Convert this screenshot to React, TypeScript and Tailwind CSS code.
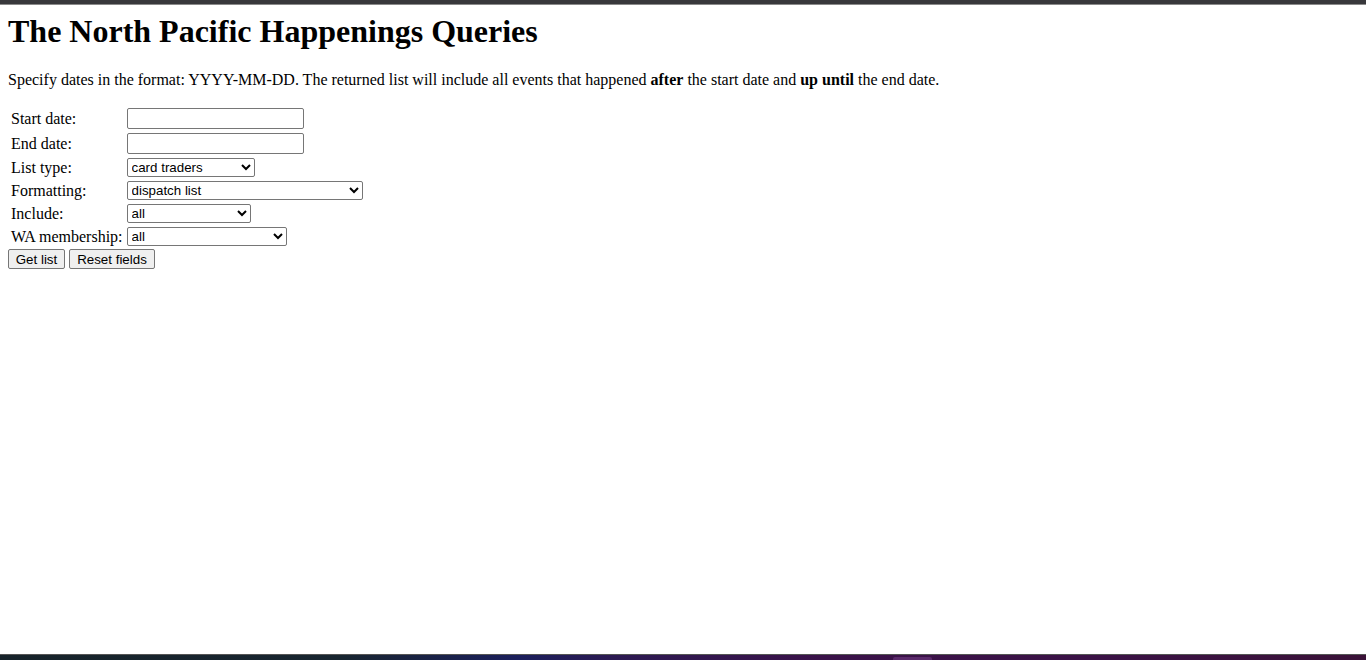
import React from "react";

const serif = { fontFamily: '"Liberation Serif", "Times New Roman", serif' };

function Label({ children }: { children: React.ReactNode }) {
  return <td className="p-[1px] align-middle text-[16px] leading-[18px] whitespace-nowrap">{children}</td>;
}

export default function App() {
  const selectCls =
    "block h-[19px] border border-[#767676] rounded-[2px] bg-white text-black text-[13.333px] leading-[15px] pl-0 py-0 [font-family:'Liberation_Sans',Arial,sans-serif]";
  const inputCls =
    "block h-[21px] w-[177px] border border-[#767676] rounded-[2px] bg-white px-[2px] text-[13.333px] [font-family:'Liberation_Sans',Arial,sans-serif]";
  const btnCls =
    "h-[20px] px-[6px] border border-[#767676] rounded-[2px] bg-[#efefef] text-black text-[13.333px] leading-[15px] [font-family:'Liberation_Sans',Arial,sans-serif]";
  return (
    <div className="h-[660px] flex flex-col bg-white text-black overflow-hidden" style={serif}>
      <div className="h-[4px] bg-[#38383b] shrink-0" />
      <div className="h-[1px] bg-[#8a8a8a] shrink-0" />
      <div className="flex-1 px-[8px]">
        <h1 className="mt-[8px] text-[32px] leading-[37px] font-bold">The North Pacific Happenings Queries</h1>
        <p className="mt-[21px] text-[16px] leading-[18px]">
          Specify dates in the format: YYYY-MM-DD. The returned list will include all events that happened{" "}
          <b>after</b> the start date and <b>up until</b> the end date.
        </p>
        <form className="mt-[16px]" onSubmit={(e) => e.preventDefault()}>
          <table className="border-separate border-spacing-[2px]">
            <tbody>
              <tr>
                <Label>Start date:</Label>
                <td className="p-[1px]"><input type="text" className={inputCls} /></td>
              </tr>
              <tr>
                <Label>End date:</Label>
                <td className="p-[1px]"><input type="text" className={inputCls} /></td>
              </tr>
              <tr>
                <Label>List type:</Label>
                <td className="p-[1px]">
                  <select className={`${selectCls} w-[128px]`} defaultValue="card traders">
                    <option>card traders</option>
                  </select>
                </td>
              </tr>
              <tr>
                <Label>Formatting:</Label>
                <td className="p-[1px]">
                  <select className={`${selectCls} w-[236px]`} defaultValue="dispatch list">
                    <option>dispatch list</option>
                  </select>
                </td>
              </tr>
              <tr>
                <Label>Include:</Label>
                <td className="p-[1px]">
                  <select className={`${selectCls} w-[124px]`} defaultValue="all">
                    <option>all</option>
                  </select>
                </td>
              </tr>
              <tr>
                <Label>WA membership:</Label>
                <td className="p-[1px]">
                  <select className={`${selectCls} w-[160px]`} defaultValue="all">
                    <option>all</option>
                  </select>
                </td>
              </tr>
            </tbody>
          </table>
          <div className="flex gap-[4px]">
            <button type="submit" className={`${btnCls} w-[57px]`}>Get list</button>
            <button type="reset" className={`${btnCls} w-[86px]`}>Reset fields</button>
          </div>
        </form>
      </div>
      <div className="h-[1px] bg-[#555] shrink-0" />
      <div className="relative h-[5px] shrink-0 bg-[linear-gradient(90deg,#17232a_0%,#182530_25%,#1b1f5c_38%,#2c1a52_45%,#3a1249_60%,#3b1246_80%,#3a1238_100%)]">
        <div className="absolute left-[893px] top-[2px] h-[3px] w-[39px] rounded-t-[2px] bg-[#5a2a6a]" />
      </div>
    </div>
  );
}
